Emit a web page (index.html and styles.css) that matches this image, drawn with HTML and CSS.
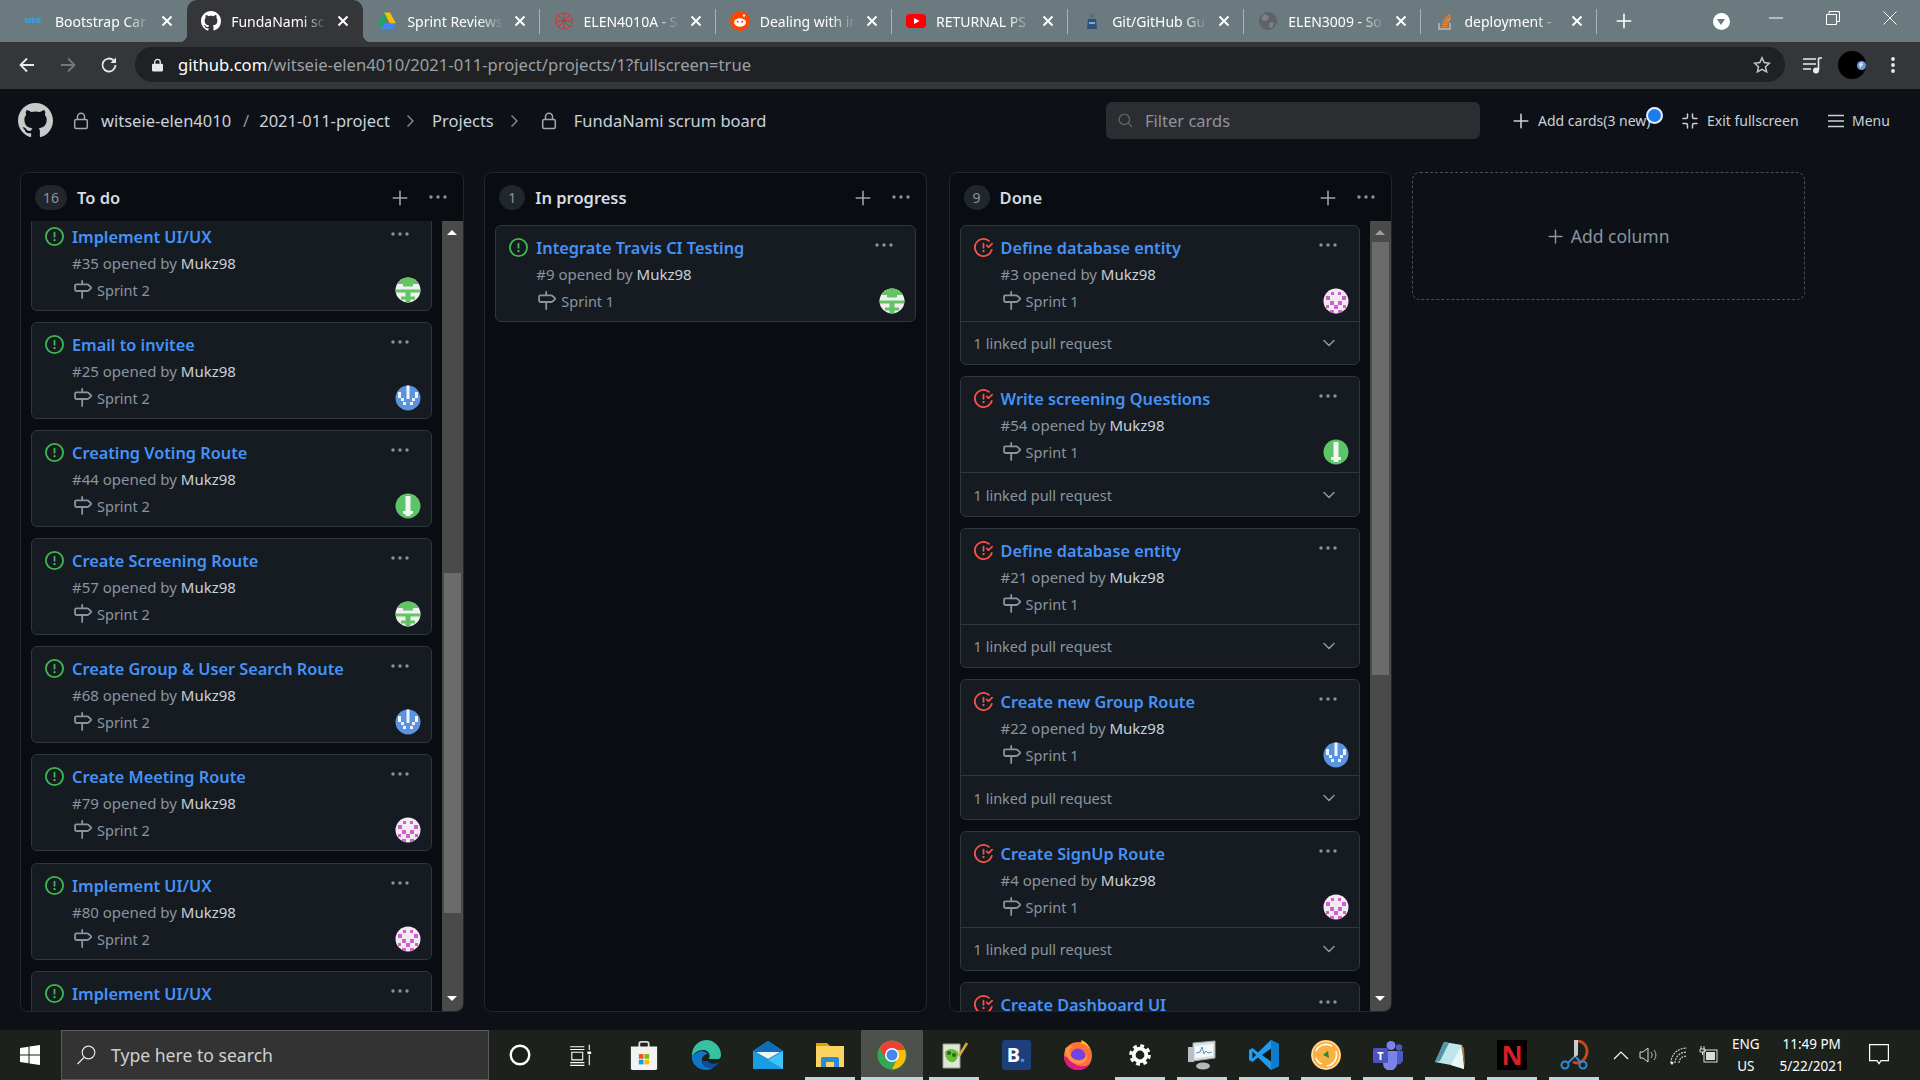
FILE: index.html
```html
<!DOCTYPE html>
<html lang="en">
<head>
    <meta charset="UTF-8">
    <title>FundaNami scrum board</title>
    <link rel="stylesheet" href="styles.css">
</head>
<body>

<!-- shared icons -->
<svg class="sprite" aria-hidden="true">
    <clipPath id="av-clip"><circle cx="13" cy="13" r="12.500"/></clipPath>
    <symbol id="i-github" viewBox="0 0 16 16"><path fill-rule="evenodd" d="M8 0C3.58 0 0 3.58 0 8c0 3.54 2.29 6.53 5.47 7.59.4.07.55-.17.55-.38 0-.19-.01-.82-.01-1.49-2.01.37-2.53-.49-2.69-.94-.09-.23-.48-.94-.82-1.13-.28-.15-.68-.52-.01-.53.63-.01 1.08.58 1.23.82.72 1.21 1.87.87 2.33.66.07-.52.28-.87.51-1.07-1.78-.2-3.64-.89-3.64-3.95 0-.87.31-1.59.82-2.15-.08-.2-.36-1.02.08-2.12 0 0 .67-.21 2.2.82.64-.18 1.32-.27 2-.27.68 0 1.36.09 2 .27 1.53-1.04 2.2-.82 2.2-.82.44 1.1.16 1.92.08 2.12.51.56.82 1.27.82 2.15 0 3.07-1.87 3.75-3.65 3.95.29.25.54.73.54 1.48 0 1.07-.01 1.93-.01 2.2 0 .21.15.46.55.38A8.013 8.013 0 0016 8c0-4.42-3.58-8-8-8z"/></symbol>
    <symbol id="i-open" viewBox="0 0 16 16"><path fill-rule="evenodd" d="M8 1.5a6.5 6.5 0 100 13 6.5 6.5 0 000-13zM0 8a8 8 0 1116 0A8 8 0 010 8zm9 3a1 1 0 11-2 0 1 1 0 012 0zm-.25-6.25a.75.75 0 00-1.5 0v3.5a.75.75 0 001.5 0v-3.5z"/></symbol>
    <symbol id="i-closed" viewBox="0 0 16 16"><path d="M1.5 8a6.5 6.5 0 0110.65-5.003.75.75 0 00.959-1.153 8 8 0 102.592 8.33.75.75 0 10-1.444-.407A6.5 6.5 0 011.5 8zM8 12a1 1 0 100-2 1 1 0 000 2zm0-8a.75.75 0 01.75.75v3.5a.75.75 0 11-1.5 0v-3.5A.75.75 0 018 4zm4.78 4.28l3-3a.75.75 0 00-1.06-1.06l-2.47 2.47-.97-.97a.749.749 0 10-1.06 1.06l1.5 1.5a.75.75 0 001.06 0z"/></symbol>
    <symbol id="i-milestone" viewBox="0 0 16 16"><path fill-rule="evenodd" d="M7.75 0a.75.75 0 01.75.75V3h3.634c.414 0 .814.147 1.13.414l2.07 1.75a1.75 1.75 0 010 2.672l-2.07 1.75a1.75 1.75 0 01-1.13.414H8.5v5.25a.75.75 0 11-1.5 0V10H2.75A1.75 1.75 0 011 8.25v-3.5C1 3.784 1.784 3 2.75 3H7V.75A.75.75 0 017.75 0zm0 8.5h4.384a.25.25 0 00.161-.06l2.07-1.75a.25.25 0 000-.38l-2.07-1.75a.25.25 0 00-.161-.06H2.75a.25.25 0 00-.25.25v3.5c0 .138.112.25.25.25h5z"/></symbol>
    <symbol id="i-dots" viewBox="0 0 20 4"><circle cx="3" cy="2" r="1.7"/><circle cx="10" cy="2" r="1.7"/><circle cx="17" cy="2" r="1.7"/></symbol>
    <symbol id="i-plus" viewBox="0 0 16 16"><path d="M8 1.2v13.6M1.2 8h13.6" fill="none" stroke="currentColor" stroke-width="1.6" stroke-linecap="round"/></symbol>
    <symbol id="i-close" viewBox="0 0 12 12"><path d="M1.5 1.5l9 9M10.5 1.5l-9 9" fill="none" stroke="currentColor" stroke-width="2"/></symbol>
    <symbol id="i-chevron" viewBox="0 0 14 14"><path d="M2 4.5l5 5 5-5" fill="none" stroke="currentColor" stroke-width="1.6" stroke-linecap="round" stroke-linejoin="round"/></symbol>
    <symbol id="i-crumb" viewBox="0 0 10 16"><path d="M2.5 2.5L8 8l-5.500 5.500" fill="none" stroke="currentColor" stroke-width="1.3"/></symbol>
    <symbol id="i-lock" viewBox="0 0 16 18"><rect x="1.700" y="7.500" width="12.600" height="9" rx="1.500" fill="none" stroke="currentColor" stroke-width="1.500"/><path d="M4.500 7.500V4.800a3.500 3.500 0 017 0v2.700" fill="none" stroke="currentColor" stroke-width="1.500"/></symbol>

    <symbol id="av-green" viewBox="0 0 26 26"><g clip-path="url(#av-clip)"><rect width="26" height="26" fill="#f0f0f0"/><path d="M0 0h26v7H0zM8 7h10v2.500H8zM0 12.500h26v3H0zM10.500 15h5v11h-5zM6 19.500h14v3H6z" fill="#62c462"/></g></symbol>
    <symbol id="av-blue" viewBox="0 0 26 26"><g clip-path="url(#av-clip)"><rect width="26" height="26" fill="#5a94e0"/><path d="M11.500 0h3v14h-3zM3 7h3v6H3zM20 7h3v6h-3zM6 13h3v3H6zM17 13h3v3h-3zM8 17h3v3H8zM15 17h3v3h-3z" fill="#f0f4fa"/></g></symbol>
    <symbol id="av-pink" viewBox="0 0 26 26"><g clip-path="url(#av-clip)"><rect width="26" height="26" fill="#f2e9f2"/><path d="M3 8h4v4H3zM19 8h4v4h-4zM8 4h3v3H8zM15 4h3v3h-3zM7 13h4v4H7zM15 13h4v4h-4zM11 17h4v4h-4zM3 17h3v3H3zM20 17h3v3h-3zM7 22h4v4H7zM15 22h4v4h-4z" fill="#c866c8"/></g></symbol>
    <symbol id="av-mint" viewBox="0 0 26 26"><g clip-path="url(#av-clip)"><rect width="26" height="26" fill="#5ec46a"/><path d="M10.500 3h5v20h-5zM8 18h10v3H8z" fill="#f2f6f2"/></g></symbol>
</svg>

<div class="tabstrip">
    <div class="tab">
        <span class="tab-icon mdb">MDB</span>
        <span class="tab-title">Bootstrap Car</span>
        <svg class="tab-close"><use href="#i-close"/></svg>
    </div>
    <div class="tab active">
        <svg class="tab-icon" viewBox="0 0 20 20"><use href="#i-github" width="20" height="20" fill="#fff"/></svg>
        <span class="tab-title">FundaNami sc</span>
        <svg class="tab-close"><use href="#i-close"/></svg>
    </div>
    <div class="tab sep">
        <svg class="tab-icon" viewBox="0 0 20 20"><path d="M7 1.500h6l6 11h-6z" fill="#fbbc04"/><path d="M7 1.500l-6 11 3 5.500 6-11z" fill="#1fa463"/><path d="M4 18h12l3-5.500H7z" fill="#4285f4"/></svg>
        <span class="tab-title">Sprint Reviews</span>
        <svg class="tab-close"><use href="#i-close"/></svg>
    </div>
    <div class="tab sep">
        <svg class="tab-icon" viewBox="0 0 20 20"><circle cx="10" cy="10" r="8" fill="none" stroke="#d83a3a" stroke-width="1.600" stroke-dasharray="3 1.200"/><path d="M10 2v16M2 10h16M4.500 4.500l11 11M15.500 4.500l-11 11" stroke="#c92f2f" stroke-width=".9"/></svg>
        <span class="tab-title">ELEN4010A - S</span>
        <svg class="tab-close"><use href="#i-close"/></svg>
    </div>
    <div class="tab sep">
        <svg class="tab-icon" viewBox="0 0 20 20"><circle cx="10" cy="10" r="10" fill="#ff4500"/><ellipse cx="10" cy="11.500" rx="6" ry="4.200" fill="#fff"/><circle cx="7.800" cy="10.800" r="1" fill="#ff4500"/><circle cx="12.200" cy="10.800" r="1" fill="#ff4500"/><circle cx="14" cy="4.500" r="1.200" fill="#fff"/></svg>
        <span class="tab-title">Dealing with in</span>
        <svg class="tab-close"><use href="#i-close"/></svg>
    </div>
    <div class="tab sep">
        <svg class="tab-icon" viewBox="0 0 20 20"><rect y="3" width="20" height="14" rx="4" fill="#f00"/><path d="M8 7l5.500 3L8 13z" fill="#fff"/></svg>
        <span class="tab-title">RETURNAL PS</span>
        <svg class="tab-close"><use href="#i-close"/></svg>
    </div>
    <div class="tab sep">
        <svg class="tab-icon" viewBox="0 0 20 20"><path d="M7 1l3 4 3-4-2 6h-2z" fill="#4a6a8a"/><path d="M6 8h8l1 10H5z" fill="#2f4f7f"/><path d="M7 11h6v2H7z" fill="#8aa4c4"/></svg>
        <span class="tab-title">Git/GitHub Gu</span>
        <svg class="tab-close"><use href="#i-close"/></svg>
    </div>
    <div class="tab sep">
        <svg class="tab-icon" viewBox="0 0 20 20"><circle cx="10" cy="10" r="9" fill="#5f6368"/><path d="M6 3l5 2-1 4-4 1-3-2zM12 11l4 1-2 5-3-1z" fill="#7d8286"/></svg>
        <span class="tab-title">ELEN3009 - So</span>
        <svg class="tab-close"><use href="#i-close"/></svg>
    </div>
    <div class="tab sep">
        <svg class="tab-icon" viewBox="0 0 20 20"><path d="M4 12v6h11v-6" fill="none" stroke="#bcbbbb" stroke-width="1.500"/><path d="M6.500 15.500h6M6.700 13l6 .6M7.500 10.300l5.800 1.600M9 7.700l5 3M11 5.300l3.800 4.500M13.700 3.300l1.700 5.500" stroke="#f48024" stroke-width="1.500"/></svg>
        <span class="tab-title">deployment -</span>
        <svg class="tab-close"><use href="#i-close"/></svg>
    </div>
    <svg class="new-tab"><use href="#i-plus"/></svg>
    <span class="tab-search"></span>
    <div class="window-controls">
        <svg viewBox="0 0 14 14"><path d="M0 7h14" stroke="#fff"/></svg>
        <svg viewBox="0 0 14 14"><path d="M.5 3.500h10v10H.500zM3 3.500V.5h10.500v10h-3" fill="none" stroke="#fff"/></svg>
        <svg viewBox="0 0 14 14"><path d="M.5.5l13 13M13.500.5l-13 13" stroke="#fff"/></svg>
    </div>
</div>

<div class="toolbar">
    <svg class="nav-icon" viewBox="0 0 18 18"><path d="M16 9H2.500M9 2.500L2.500 9 9 15.500" fill="none" stroke="#e8eaed" stroke-width="1.800"/></svg>
    <svg class="nav-icon" viewBox="0 0 18 18"><path d="M2 9h13.500M9 2.500L15.500 9 9 15.500" fill="none" stroke="#74777b" stroke-width="1.800"/></svg>
    <svg class="nav-icon" viewBox="0 0 18 18"><path d="M15.500 9A6.500 6.500 0 1113.600 4.400" fill="none" stroke="#e8eaed" stroke-width="1.800"/><path d="M16 1.500v5.500h-5.500z" fill="#e8eaed"/></svg>
    <div class="omnibox">
        <svg class="omni-lock" viewBox="0 0 12 14"><rect y="5.500" width="12" height="8.500" rx="1.200" fill="#e8eaed"/><path d="M3 6V3.800a3 3 0 016 0V6" fill="none" stroke="#e8eaed" stroke-width="1.400"/></svg>
        <span class="url"><b>github.com</b>/witseie-elen4010/2021-011-project/projects/1?fullscreen=true</span>
        <svg class="omni-star" viewBox="0 0 18 18"><path d="M9 1.800l2.200 4.800 5.200.6-3.900 3.500 1.100 5.200L9 13.300l-4.600 2.600 1.100-5.200L1.600 7.200l5.200-.6z" fill="none" stroke="#c4c7ca" stroke-width="1.500"/></svg>
    </div>
    <svg class="tool-icon" viewBox="0 0 20 18"><path d="M1 3h13M1 8h13M1 13h8" stroke="#e8eaed" stroke-width="1.500"/><path d="M16.500 2v12" stroke="#e8eaed" stroke-width="1.600"/><path d="M16.500 2H20" stroke="#e8eaed" stroke-width="1.600"/><circle cx="14" cy="14.500" r="3" fill="#e8eaed"/></svg>
    <svg class="profile" viewBox="0 0 28 28"><circle cx="14" cy="14" r="14" fill="#000"/><circle cx="23.500" cy="14.500" r="4.500" fill="#6d9bd8"/><path d="M21 13l3-2 1 3-3 3z" fill="#cfe0f4"/></svg>
    <svg class="tool-icon kebab" viewBox="0 0 4 18"><circle cx="2" cy="3" r="1.900" fill="#e8eaed"/><circle cx="2" cy="9" r="1.900" fill="#e8eaed"/><circle cx="2" cy="15" r="1.900" fill="#e8eaed"/></svg>
</div>

<header class="gh-header">
    <svg class="gh-logo"><use href="#i-github"/></svg>
    <svg class="crumb-lock"><use href="#i-lock"/></svg>
    <span class="crumb-text">witseie-elen4010</span>
    <span class="crumb-slash">/</span>
    <span class="crumb-text">2021-011-project</span>
    <svg class="crumb-chevron"><use href="#i-crumb"/></svg>
    <span class="crumb-text">Projects</span>
    <svg class="crumb-chevron"><use href="#i-crumb"/></svg>
    <svg class="crumb-lock second"><use href="#i-lock"/></svg>
    <span class="crumb-text">FundaNami scrum board</span>

    <div class="filter">
        <svg viewBox="0 0 16 16"><circle cx="6.800" cy="6.800" r="5.600" fill="none" stroke="currentColor" stroke-width="1.400"/><path d="M11 11l4 4" stroke="currentColor" stroke-width="1.400"/></svg>
        <span>Filter cards</span>
    </div>

    <div class="head-action add-cards">
        <svg><use href="#i-plus"/></svg>
        <span>Add cards(3 new)</span>
        <i class="new-dot"></i>
    </div>
    <div class="head-action exit">
        <svg viewBox="0 0 16 16"><path d="M5.500 1v3A1.500 1.500 0 014 5.500H1M10.500 1v3A1.500 1.500 0 0012 5.500h3M5.500 15v-3A1.500 1.500 0 004 10.500H1M10.500 15v-3a1.500 1.500 0 011.500-1.500h3" fill="none" stroke="currentColor" stroke-width="1.500" stroke-linecap="round"/></svg>
        <span>Exit fullscreen</span>
    </div>
    <div class="head-action menu">
        <svg viewBox="0 0 16 16"><path d="M0 2.500h16M0 8h16M0 13.500h16" stroke="currentColor" stroke-width="1.500"/></svg>
        <span>Menu</span>
    </div>
</header>

<main class="board">
    <section class="column">
        <div class="column-head">
            <span class="count">16</span>
            <h2>To do</h2>
            <svg class="col-plus"><use href="#i-plus"/></svg>
            <svg class="dots"><use href="#i-dots"/></svg>
        </div>
        <div class="column-body">
            <div class="cards scrolled">
                <article class="card"><div class="card-main">
                    <svg class="state open"><use href="#i-open"/></svg>
                    <div class="card-text">
                        <div class="title-row"><a>Implement UI/UX</a><svg class="dots"><use href="#i-dots"/></svg></div>
                        <div class="meta">#35 opened by <b>Mukz98</b></div>
                        <div class="sprint-row"><svg class="ms"><use href="#i-milestone"/></svg><span>Sprint 2</span><svg class="avatar"><use href="#av-green"/></svg></div>
                    </div>
                </div></article>
                <article class="card"><div class="card-main">
                    <svg class="state open"><use href="#i-open"/></svg>
                    <div class="card-text">
                        <div class="title-row"><a>Email to invitee</a><svg class="dots"><use href="#i-dots"/></svg></div>
                        <div class="meta">#25 opened by <b>Mukz98</b></div>
                        <div class="sprint-row"><svg class="ms"><use href="#i-milestone"/></svg><span>Sprint 2</span><svg class="avatar"><use href="#av-blue"/></svg></div>
                    </div>
                </div></article>
                <article class="card"><div class="card-main">
                    <svg class="state open"><use href="#i-open"/></svg>
                    <div class="card-text">
                        <div class="title-row"><a>Creating Voting Route</a><svg class="dots"><use href="#i-dots"/></svg></div>
                        <div class="meta">#44 opened by <b>Mukz98</b></div>
                        <div class="sprint-row"><svg class="ms"><use href="#i-milestone"/></svg><span>Sprint 2</span><svg class="avatar"><use href="#av-mint"/></svg></div>
                    </div>
                </div></article>
                <article class="card"><div class="card-main">
                    <svg class="state open"><use href="#i-open"/></svg>
                    <div class="card-text">
                        <div class="title-row"><a>Create Screening Route</a><svg class="dots"><use href="#i-dots"/></svg></div>
                        <div class="meta">#57 opened by <b>Mukz98</b></div>
                        <div class="sprint-row"><svg class="ms"><use href="#i-milestone"/></svg><span>Sprint 2</span><svg class="avatar"><use href="#av-green"/></svg></div>
                    </div>
                </div></article>
                <article class="card"><div class="card-main">
                    <svg class="state open"><use href="#i-open"/></svg>
                    <div class="card-text">
                        <div class="title-row"><a>Create Group &amp; User Search Route</a><svg class="dots"><use href="#i-dots"/></svg></div>
                        <div class="meta">#68 opened by <b>Mukz98</b></div>
                        <div class="sprint-row"><svg class="ms"><use href="#i-milestone"/></svg><span>Sprint 2</span><svg class="avatar"><use href="#av-blue"/></svg></div>
                    </div>
                </div></article>
                <article class="card"><div class="card-main">
                    <svg class="state open"><use href="#i-open"/></svg>
                    <div class="card-text">
                        <div class="title-row"><a>Create Meeting Route</a><svg class="dots"><use href="#i-dots"/></svg></div>
                        <div class="meta">#79 opened by <b>Mukz98</b></div>
                        <div class="sprint-row"><svg class="ms"><use href="#i-milestone"/></svg><span>Sprint 2</span><svg class="avatar"><use href="#av-pink"/></svg></div>
                    </div>
                </div></article>
                <article class="card"><div class="card-main">
                    <svg class="state open"><use href="#i-open"/></svg>
                    <div class="card-text">
                        <div class="title-row"><a>Implement UI/UX</a><svg class="dots"><use href="#i-dots"/></svg></div>
                        <div class="meta">#80 opened by <b>Mukz98</b></div>
                        <div class="sprint-row"><svg class="ms"><use href="#i-milestone"/></svg><span>Sprint 2</span><svg class="avatar"><use href="#av-pink"/></svg></div>
                    </div>
                </div></article>
                <article class="card"><div class="card-main">
                    <svg class="state open"><use href="#i-open"/></svg>
                    <div class="card-text">
                        <div class="title-row"><a>Implement UI/UX</a><svg class="dots"><use href="#i-dots"/></svg></div>
                    </div>
                </div></article>
            </div>
            <div class="scrollbar">
                <div class="scroll-btn up"></div>
                <div class="scroll-track"><div class="thumb todo-thumb"></div></div>
                <div class="scroll-btn down"></div>
            </div>
        </div>
    </section>

    <section class="column">
        <div class="column-head">
            <span class="count">1</span>
            <h2>In progress</h2>
            <svg class="col-plus"><use href="#i-plus"/></svg>
            <svg class="dots"><use href="#i-dots"/></svg>
        </div>
        <div class="column-body">
            <div class="cards">
                <article class="card"><div class="card-main">
                    <svg class="state open"><use href="#i-open"/></svg>
                    <div class="card-text">
                        <div class="title-row"><a>Integrate Travis CI Testing</a><svg class="dots"><use href="#i-dots"/></svg></div>
                        <div class="meta">#9 opened by <b>Mukz98</b></div>
                        <div class="sprint-row"><svg class="ms"><use href="#i-milestone"/></svg><span>Sprint 1</span><svg class="avatar"><use href="#av-green"/></svg></div>
                    </div>
                </div></article>
            </div>
        </div>
    </section>

    <section class="column">
        <div class="column-head">
            <span class="count">9</span>
            <h2>Done</h2>
            <svg class="col-plus"><use href="#i-plus"/></svg>
            <svg class="dots"><use href="#i-dots"/></svg>
        </div>
        <div class="column-body">
            <div class="cards">
                <article class="card"><div class="card-main">
                    <svg class="state closed"><use href="#i-closed"/></svg>
                    <div class="card-text">
                        <div class="title-row"><a>Define database entity</a><svg class="dots"><use href="#i-dots"/></svg></div>
                        <div class="meta">#3 opened by <b>Mukz98</b></div>
                        <div class="sprint-row"><svg class="ms"><use href="#i-milestone"/></svg><span>Sprint 1</span><svg class="avatar"><use href="#av-pink"/></svg></div>
                    </div>
                </div>
                <div class="linked">1 linked pull request<svg><use href="#i-chevron"/></svg></div></article>
                <article class="card"><div class="card-main">
                    <svg class="state closed"><use href="#i-closed"/></svg>
                    <div class="card-text">
                        <div class="title-row"><a>Write screening Questions</a><svg class="dots"><use href="#i-dots"/></svg></div>
                        <div class="meta">#54 opened by <b>Mukz98</b></div>
                        <div class="sprint-row"><svg class="ms"><use href="#i-milestone"/></svg><span>Sprint 1</span><svg class="avatar"><use href="#av-mint"/></svg></div>
                    </div>
                </div>
                <div class="linked">1 linked pull request<svg><use href="#i-chevron"/></svg></div></article>
                <article class="card"><div class="card-main">
                    <svg class="state closed"><use href="#i-closed"/></svg>
                    <div class="card-text">
                        <div class="title-row"><a>Define database entity</a><svg class="dots"><use href="#i-dots"/></svg></div>
                        <div class="meta">#21 opened by <b>Mukz98</b></div>
                        <div class="sprint-row"><svg class="ms"><use href="#i-milestone"/></svg><span>Sprint 1</span></div>
                    </div>
                </div>
                <div class="linked">1 linked pull request<svg><use href="#i-chevron"/></svg></div></article>
                <article class="card"><div class="card-main">
                    <svg class="state closed"><use href="#i-closed"/></svg>
                    <div class="card-text">
                        <div class="title-row"><a>Create new Group Route</a><svg class="dots"><use href="#i-dots"/></svg></div>
                        <div class="meta">#22 opened by <b>Mukz98</b></div>
                        <div class="sprint-row"><svg class="ms"><use href="#i-milestone"/></svg><span>Sprint 1</span><svg class="avatar"><use href="#av-blue"/></svg></div>
                    </div>
                </div>
                <div class="linked">1 linked pull request<svg><use href="#i-chevron"/></svg></div></article>
                <article class="card"><div class="card-main">
                    <svg class="state closed"><use href="#i-closed"/></svg>
                    <div class="card-text">
                        <div class="title-row"><a>Create SignUp Route</a><svg class="dots"><use href="#i-dots"/></svg></div>
                        <div class="meta">#4 opened by <b>Mukz98</b></div>
                        <div class="sprint-row"><svg class="ms"><use href="#i-milestone"/></svg><span>Sprint 1</span><svg class="avatar"><use href="#av-pink"/></svg></div>
                    </div>
                </div>
                <div class="linked">1 linked pull request<svg><use href="#i-chevron"/></svg></div></article>
                <article class="card"><div class="card-main">
                    <svg class="state closed"><use href="#i-closed"/></svg>
                    <div class="card-text">
                        <div class="title-row"><a>Create Dashboard UI</a><svg class="dots"><use href="#i-dots"/></svg></div>
                    </div>
                </div></article>
            </div>
            <div class="scrollbar">
                <div class="scroll-btn up muted"></div>
                <div class="scroll-track"><div class="thumb done-thumb"></div></div>
                <div class="scroll-btn down"></div>
            </div>
        </div>
    </section>

    <div class="add-column">
        <svg><use href="#i-plus"/></svg>
        <span>Add column</span>
    </div>
</main>

<footer class="taskbar">
    <svg class="start" viewBox="0 0 20 20"><path d="M0 3l8.500-1.200v7.700H0zM9.500 1.600L20 0v9.500H9.500zM0 10.500h8.500v7.700L0 17zM9.500 10.500H20V20L9.500 18.400z" fill="#fff"/></svg>
    <div class="search">
        <svg viewBox="0 0 20 20"><circle cx="12.500" cy="7.500" r="6.300" fill="none" stroke="#e6e6e6" stroke-width="1.200"/><path d="M8 12.500l-6.500 6.500" stroke="#e6e6e6" stroke-width="1.200"/></svg>
        <span>Type here to search</span>
    </div>
    <div class="task-icons">
        <div class="task"><svg viewBox="0 0 22 22"><circle cx="11" cy="11" r="8.500" fill="none" stroke="#fff" stroke-width="2.200"/></svg></div>
        <div class="task"><svg class="taskview" viewBox="0 0 22 22"><path d="M2 3.500h13M2 6h13M3.500 8.500h10v7h-10zM2 18h13M2 20.500h13M19.500 1.500v5M19.500 11v9.500" fill="none" stroke="#fff" stroke-width="1"/><rect x="17.800" y="7.800" width="3.400" height="2.400" fill="#fff"/></svg></div>
        <div class="task"><svg viewBox="0 0 30 32"><path d="M10 8V4a2 2 0 012-2h6a2 2 0 012 2v4" fill="none" stroke="#d9d9d9" stroke-width="2"/><path d="M1 7h28v23a2 2 0 01-2 2H3a2 2 0 01-2-2z" fill="#f2f2f2"/><path d="M9.500 15h5v5h-5z" fill="#f25022"/><path d="M15.500 15h5v5h-5z" fill="#7fba00"/><path d="M9.500 21h5v5h-5z" fill="#00a4ef"/><path d="M15.500 21h5v5h-5z" fill="#ffb900"/></svg></div>
        <div class="task"><svg viewBox="0 0 30 30"><path d="M15 0a15 15 0 0115 15c0 2-1 4-3 4h-9c2-5-1-9-6-9-6 0-10 4-11 7A15 15 0 0115 0z" fill="#35c1a2"/><path d="M.8 17C1 25 8 30 15 30c3 0 6-1 8-3-7 2-11-1-12-5s2-8 6-8c-3-3-7-4-10-2S1 14 .8 17z" fill="#0f75c8"/><path d="M11 21c1 5 6 9 12 6 2-1 4-3 5-5-4 3-10 2-11-1z" fill="#0c4f9e"/></svg></div>
        <div class="task"><svg viewBox="0 0 30 30"><path d="M0 11L15 1l15 10v18H0z" fill="#29b6f6"/><path d="M15 1L0 11l15 9 15-9z" fill="#0d6ebd"/><path d="M3 12h24l-12 7z" fill="#eef4f8"/><path d="M0 11l15 9 15-9v18z" fill="#3dc3f5"/><path d="M0 11v18h30z" fill="#1a9ce0"/></svg></div>
        <div class="task"><svg viewBox="0 0 30 30"><path d="M1 3h11l3 3h-14z" fill="#e2a100"/><rect x="1" y="6" width="28" height="21" fill="#fcd462"/><path d="M6 27v-8a2 2 0 012-2h14a2 2 0 012 2v8h-5v-5h-8v5z" fill="#2d8ad8"/></svg></div>
        <div class="task active"><svg viewBox="0 0 30 30"><circle cx="15" cy="15" r="14.500" fill="#34a853"/><path d="M15 .5A14.500 14.500 0 002.500 8L8 17l7-7h13A14.500 14.500 0 0015 .5z" fill="#ea4335"/><path d="M28 10H15l6 7-6 12.500A14.500 14.500 0 0028 10z" fill="#fbbc04"/><circle cx="15" cy="15" r="7" fill="#fff"/><circle cx="15" cy="15" r="5.500" fill="#4285f4"/></svg></div>
        <div class="task"><svg viewBox="0 0 30 30"><path d="M4 4h17v24H4z" fill="#dfe6d6" stroke="#9aa48c"/><path d="M6 12c3-4 9-4 13 0 1 3-1 8-4 10-5 1-9-3-9-10z" fill="#6abf2e"/><circle cx="10" cy="13" r="2" fill="#263"/><circle cx="15" cy="15" r="2" fill="#263"/><path d="M20 16L28 3" stroke="#d9a83c" stroke-width="2.500"/></svg></div>
        <div class="task"><span class="booking">B<i>.</i></span></div>
        <div class="task"><svg viewBox="0 0 30 30"><circle cx="15" cy="16" r="14" fill="#ff7139"/><path d="M15 3c8 0 14 6 14 13 0-6-4-14-11-16 1 2 1 3-3 3z" fill="#ffbd2e"/><path d="M1 16C1 24 7 30 15 30c5 0 9-2 12-6-6 4-16 3-19-5z" fill="#e31587"/><circle cx="15" cy="16" r="7.500" fill="#7542e5"/><path d="M2 9c2-3 6-4 9-2-4 0-5 3-4 6 1 5 5 8 11 7 4-1 5-4 5-6 2 4 0 9-6 10C9 25 3 19 2 9z" fill="#ff9640"/></svg></div>
        <div class="task"><svg viewBox="0 0 24 24"><circle cx="12" cy="12" r="6.300" fill="none" stroke="#fff" stroke-width="3.800"/><circle cx="12" cy="12" r="9.300" fill="none" stroke="#fff" stroke-width="3" stroke-dasharray="3.800 3.500"/></svg></div>
        <div class="task"><svg viewBox="0 0 30 30"><path d="M6 3l22-2v17L6 21z" fill="#dbe0e3" stroke="#9aa"/><path d="M8 6l18-2v12L8 18z" fill="#f6f8fa"/><path d="M9 13l4-1 2-5 2 7 2-3 2 2 4-1" fill="none" stroke="#4a90c2"/><rect x="1" y="7" width="6" height="15" fill="#b9bfc2"/><ellipse cx="16" cy="26" rx="7" ry="3.500" fill="#b5b8ba"/></svg></div>
        <div class="task"><svg viewBox="0 0 30 30"><path d="M22 0l8 4v22l-8 4L9 17.500 3.500 22 0 20V10l3.500-2L9 12.500z" fill="#1f9cf0"/><path d="M22 0v30l8-4V4z" fill="#0e7ccb"/><path d="M22 8.500L13 15l9 6.500z" fill="#111a14"/><path d="M3.500 11.500v7L7 15z" fill="#111a14"/></svg></div>
        <div class="task"><svg viewBox="0 0 30 30"><circle cx="15" cy="15" r="15" fill="#fbb040"/><circle cx="15" cy="15" r="14" fill="none" stroke="#fff" stroke-width=".8"/><path d="M5 11C8 4 16 3 21 6M25 11c2 7-2 14-9 15M5 18c1 3 3 5 6 6" fill="none" stroke="#fff" stroke-width="1.600"/><path d="M12 15l5-4 1 7z" fill="#1f8a3b"/></svg></div>
        <div class="task"><span class="teams"><svg viewBox="0 0 30 30"><circle cx="18" cy="5.500" r="4.500" fill="#7b83eb"/><circle cx="26" cy="7.500" r="3.200" fill="#5059c9"/><path d="M20 11h10v9a5 5 0 01-7 4z" fill="#5059c9"/><path d="M9 11h15v12a7 7 0 01-14 1z" fill="#7b83eb"/><rect y="8" width="15" height="15" rx="1.500" fill="#4b53bc"/></svg><b>T</b></span></div>
        <div class="task"><svg viewBox="0 0 30 30"><path d="M9 2l18 3 2 24-13-4L0 22z" fill="#bfe6ec"/><path d="M9 2l5 1-9 18-5 1z" fill="#4f97a8"/><path d="M27 5l2 24-13-4z" fill="#eaf7f9"/><path d="M26 5l3 3 1 20z" fill="#a07c40"/></svg></div>
        <div class="task"><span class="netflix">N</span></div>
        <div class="task"><svg viewBox="0 0 30 30"><path d="M18 1c8 0 12 8 9 15s-9 8-13 6" fill="none" stroke="#c9461f" stroke-width="3"/><path d="M15 0h4v15l-4 3z" fill="#c8ccce"/><path d="M15 17l-6 6M17 17l5 6" stroke="#2d8ad8" stroke-width="2"/><circle cx="6" cy="25" r="3.500" fill="none" stroke="#2d8ad8" stroke-width="2"/><circle cx="24" cy="25" r="3.500" fill="none" stroke="#2d8ad8" stroke-width="2"/></svg></div>
    </div>
    <div class="tray">
        <svg class="tray-chevron" viewBox="0 0 16 10"><path d="M1 9l7-7 7 7" fill="none" stroke="#fff" stroke-width="1.200"/></svg>
        <svg class="tray-icon" viewBox="0 0 20 20"><path d="M1 7h3l5-4v14l-5-4H1z" fill="none" stroke="#ddd"/><path d="M12 7c1.500 2 1.500 4 0 6M15 5c2.500 3 2.500 7 0 10" fill="none" stroke="#bbb"/></svg>
        <svg class="tray-icon" viewBox="0 0 20 20"><path d="M2 18C2 9 9 3 18 3M6 18c0-6 5-11 12-11M10 18c0-4 3-7 8-7" fill="none" stroke="#ccc" stroke-width="1.200" stroke-dasharray="2 1"/><circle cx="3" cy="18" r="1.500" fill="#ddd"/></svg>
        <svg class="tray-icon" viewBox="0 0 20 20"><rect x="5" y="5" width="13" height="12" fill="none" stroke="#ddd"/><rect x="7" y="7" width="9" height="8" fill="#ddd"/><path d="M2 1v3M5 1v3M1 4h5v3H1zM3.500 7v3" stroke="#ddd" fill="none"/></svg>
        <div class="lang"><span>ENG</span><span>US</span></div>
        <div class="clock"><span>11:49 PM</span><span>5/22/2021</span></div>
        <svg class="notify" viewBox="0 0 20 22"><path d="M.6.6h18.800v16H12l-2 3-2-3H.600z" fill="none" stroke="#fff" stroke-width="1.200"/></svg>
    </div>
</footer>

</body>
</html>
```

FILE: styles.css
```css
* {
    box-sizing: border-box;
}

html, body {
    margin: 0;
    height: 100%;
    overflow: hidden;
}

body {
    display: flex;
    flex-direction: column;
    height: 1080px;
    background: #0d1117;
    color: #c9d1d9;
    font-family: "Noto Sans", "Open Sans", sans-serif;
    font-size: 14px;
}

.sprite {
    position: absolute;
    width: 0;
    height: 0;
}

/* browser tabs */
.tabstrip {
    display: flex;
    align-items: center;
    flex: 0 0 42px;
    padding-left: 11px;
    background: #6b7a7e;
    color: #fff;
}

.tab {
    position: relative;
    display: flex;
    align-items: center;
    flex: 0 0 176.2px;
    min-width: 0;
    height: 42px;
    padding: 0 14px;
}

.tab.sep::after {
    content: "";
    position: absolute;
    right: 0;
    top: 9px;
    height: 25px;
    border-right: 1px solid #a9b4b7;
}

.tab.active {
    background: #35363a;
    border-radius: 10px 10px 0 0;
}

.tab.active::before,
.tab.active::after {
    content: "";
    position: absolute;
    bottom: 0;
    width: 8px;
    height: 8px;
}

.tab.active::before {
    left: -8px;
    background: radial-gradient(circle at 0 0, transparent 8px, #35363a 8.5px);
}

.tab.active::after {
    right: -8px;
    background: radial-gradient(circle at 100% 0, transparent 8px, #35363a 8.5px);
}

.tab-icon {
    flex: 0 0 20px;
    width: 20px;
    height: 20px;
}

.mdb {
    font-size: 7px;
    font-weight: 700;
    line-height: 20px;
    color: #3aa0e0;
    white-space: nowrap;
}

.tab-title {
    flex: 1;
    width: 0;
    min-width: 0;
    margin: 0 8px 0 10px;
    white-space: nowrap;
    font-size: 14px;
    -webkit-mask-image: linear-gradient(90deg, #000 72%, transparent 98%);
    mask-image: linear-gradient(90deg, #000 72%, transparent 98%);
}

.tab-close {
    flex: 0 0 12px;
    width: 12px;
    height: 12px;
    color: #fff;
}

.new-tab {
    width: 16px;
    height: 16px;
    margin-left: 19px;
    color: #fff;
}

.tab-search {
    position: relative;
    width: 17px;
    height: 17px;
    margin-left: 81px;
    border-radius: 50%;
    background: #fff;
}

.tab-search::after {
    content: "";
    position: absolute;
    left: 4px;
    top: 6px;
    border: 4.5px solid transparent;
    border-top: 6px solid #6b7a7e;
    border-bottom: 0;
}

.window-controls {
    display: flex;
    align-items: center;
    gap: 43px;
    margin-left: 39px;
    margin-top: -6px;
}

.window-controls svg {
    width: 14px;
    height: 14px;
}

/* browser toolbar */
.toolbar {
    display: flex;
    align-items: center;
    flex: 0 0 47px;
    padding: 0 20px 2px 18px;
    background: #35363a;
}

.nav-icon {
    width: 18px;
    height: 18px;
    margin-right: 23px;
}

.omnibox {
    display: flex;
    align-items: center;
    width: 1650px;
    height: 35px;
    margin-left: -6px;
    padding: 0 14px 0 17px;
    border-radius: 18px;
    background: #202124;
}

.omni-lock {
    width: 11px;
    height: 14px;
}

.url {
    margin-left: 15px;
    font-size: 16.6px;
    color: #9aa0a6;
}

.url b {
    font-weight: 400;
    color: #fff;
}

.omni-star {
    width: 18px;
    height: 18px;
    margin-left: auto;
}

.tool-icon {
    width: 20px;
    height: 18px;
    margin-left: 17px;
}

.profile {
    width: 28px;
    height: 28px;
    margin-left: 16px;
}

.kebab {
    width: 4px;
    margin-left: 25px;
}

/* github header */
.gh-header {
    display: flex;
    align-items: center;
    flex: 0 0 83px;
    padding: 0 0 20px 18px;
    font-size: 16.5px;
}

.gh-logo {
    width: 35px;
    height: 35px;
    fill: #c9c9c9;
}

.crumb-lock {
    width: 16px;
    height: 18px;
    margin: 0 12px 0 20px;
    color: #a3a8ae;
}

.crumb-lock.second {
    margin: 0 17px 0 5px;
}

.crumb-text {
    white-space: nowrap;
    color: #c9d1d9;
}

.crumb-slash {
    margin: 0 10px 0 12px;
    color: #8b949e;
}

.crumb-chevron {
    width: 10px;
    height: 16px;
    margin: 0 17px 0 15px;
    color: #8b949e;
}

.filter {
    position: absolute;
    left: 1106px;
    top: 102px;
    display: flex;
    align-items: center;
    gap: 12px;
    width: 374px;
    height: 37px;
    padding-left: 12px;
    border-radius: 6px;
    background: #2b2d31;
    color: #8b949e;
    font-size: 16.5px;
}

.filter svg {
    width: 15px;
    height: 15px;
    color: #5f656c;
}

.head-action {
    position: absolute;
    top: 102px;
    display: flex;
    align-items: center;
    gap: 9px;
    height: 37px;
    font-size: 14px;
    white-space: nowrap;
    color: #c9d1d9;
}

.head-action svg {
    width: 16px;
    height: 16px;
    color: #c9d1d9;
}

.add-cards {
    left: 1513px;
}

.new-dot {
    position: absolute;
    left: 133px;
    top: 5px;
    width: 17px;
    height: 17px;
    border: 2px solid #e8f0ff;
    border-radius: 50%;
    background: #1f7cf0;
}

.exit {
    left: 1682px;
}

.menu {
    left: 1828px;
    gap: 8px;
}

/* board */
.board {
    display: flex;
    flex: 1;
    gap: 21.3px;
    min-height: 0;
    padding: 0 0 18px 20px;
}

.column {
    display: flex;
    flex-direction: column;
    flex: 0 0 443px;
    overflow: hidden;
    border: 1px solid #21262d;
    border-radius: 8px;
    background: #090c10;
}

.column:first-child {
    flex-basis: 444px;
    margin-right: -1px;
}

.column-head {
    display: flex;
    align-items: center;
    flex: 0 0 48px;
    padding: 1px 15px 0 14px;
}

.count {
    min-width: 26px;
    height: 25px;
    padding: 0 8px;
    border-radius: 13px;
    background: #21262d;
    color: #8b949e;
    font-size: 14px;
    line-height: 25px;
    text-align: center;
}

.column-head h2 {
    flex: 1;
    margin: 0 0 0 10px;
    font-size: 16.5px;
    font-weight: 600;
    color: #d5dbe1;
}

.col-plus {
    width: 16px;
    height: 16px;
    margin-right: 20px;
    color: #9aa2ab;
}

.dots {
    flex: 0 0 20px;
    width: 20px;
    height: 4px;
    fill: #8b949e;
}

.column-head .dots {
    margin-top: -1px;
}

.column-body {
    display: flex;
    flex: 1;
    min-height: 0;
}

.cards {
    display: flex;
    flex-direction: column;
    flex: 1;
    gap: 11.1px;
    min-width: 0;
    overflow: hidden;
    padding: 4px 10px 0 10px;
}

.cards.scrolled {
    padding-top: 0;
}

.cards.scrolled .card:first-child {
    margin-top: -7px;
}

/* cards */
.card {
    flex: none;
    border: 1px solid #30363d;
    border-radius: 6px;
    background: #161b22;
}

.card-main {
    display: flex;
    height: 95px;
    padding: 11px 11px 0 13px;
}

.state {
    flex: 0 0 19px;
    width: 19px;
    height: 19px;
    margin: 1px 8px 0 0;
}

.state.open {
    fill: #3fb950;
}

.state.closed {
    fill: #f85149;
}

.card-text {
    flex: 1;
    min-width: 0;
}

.title-row {
    display: flex;
    align-items: flex-start;
    justify-content: space-between;
    height: 22px;
}

.title-row a {
    font-size: 16.3px;
    font-weight: 600;
    line-height: 22px;
    color: #4493f8;
}

.title-row .dots {
    margin: 6px 10px 0 0;
}

.meta {
    margin-top: 4px;
    font-size: 15px;
    line-height: 22px;
    color: #8b949e;
}

.meta b {
    font-weight: 400;
    color: #c9d1d9;
}

.sprint-row {
    display: flex;
    align-items: flex-start;
    margin-top: 5px;
    height: 22px;
    font-size: 14.5px;
    line-height: 22px;
    color: #8b949e;
}

.ms {
    flex: 0 0 19px;
    width: 19px;
    height: 19px;
    margin: 1px 5px 0 1px;
    fill: #8b949e;
}

.avatar {
    width: 26px;
    height: 26px;
    margin: -2px -1px 0 auto;
}

.linked {
    display: flex;
    align-items: center;
    justify-content: space-between;
    height: 43.4px;
    padding: 0 23px 0 13px;
    border-top: 1px solid #30363d;
    font-size: 14.5px;
    color: #8b949e;
}

.linked svg {
    width: 14px;
    height: 14px;
}

/* fake scrollbar, the windows one */
.scrollbar {
    display: flex;
    flex-direction: column;
    flex: 0 0 21px;
    background: #4a4a4a;
}

.scroll-btn {
    position: relative;
    flex: 0 0 21px;
}

.scroll-btn::after {
    content: "";
    position: absolute;
    left: 5px;
    border: 5px solid transparent;
}

.scroll-btn.up::after {
    top: 4px;
    border-bottom: 5px solid #fff;
}

.scroll-btn.up.muted::after {
    border-bottom-color: #a0a0a0;
}

.scroll-btn.down::after {
    top: 6px;
    border-top: 5px solid #fff;
}

.scroll-track {
    flex: 1;
    padding: 0 2px;
}

.thumb {
    background: #6b6b6b;
}

.todo-thumb {
    height: 340px;
    margin-top: 331px;
}

.done-thumb {
    height: 433px;
}

.add-column {
    display: flex;
    align-items: center;
    justify-content: center;
    flex: 0 0 393.5px;
    gap: 8px;
    height: 128px;
    margin-left: -1px;
    border: 1px dashed #484f58;
    border-radius: 8px;
    font-size: 17.5px;
    color: #8b949e;
}

.add-column svg {
    width: 15px;
    height: 15px;
}

/* windows taskbar */
.taskbar {
    display: flex;
    align-items: center;
    flex: 0 0 50px;
    background: #1c211c;
}

.start {
    width: 20px;
    height: 20px;
    margin: 0 21px 0 20px;
}

.search {
    display: flex;
    align-items: center;
    gap: 15px;
    width: 428px;
    height: 50px;
    padding-left: 14px;
    background: #333;
    border: 1px solid #5a5a5a;
    color: #d0d0d0;
    font-size: 17.6px;
}

.search svg {
    width: 20px;
    height: 20px;
}

.task-icons {
    display: flex;
    height: 50px;
}

.task {
    position: relative;
    display: flex;
    align-items: center;
    justify-content: center;
    flex: 0 0 62px;
    height: 50px;
}

.task svg {
    width: 30px;
    height: 30px;
}

.task:nth-child(1) svg,
.task:nth-child(2) svg,
.task:nth-child(11) svg {
    width: 24px;
    height: 24px;
}

.task .taskview {
    margin-left: -4px;
}

.task.active {
    background: #4d514c;
}

.task:nth-child(n+6)::after {
    content: "";
    position: absolute;
    left: 6px;
    right: 6px;
    bottom: 0;
    height: 3px;
    background: #b8d8dc;
}

.task:nth-child(9)::after,
.task:nth-child(10)::after {
    display: none;
}

.task.active::after {
    left: 0;
    right: 0;
}

.booking {
    width: 29px;
    height: 30px;
    border-radius: 3px;
    background: #1d3f7c;
    color: #fff;
    font-size: 20px;
    font-weight: 700;
    line-height: 30px;
    text-align: center;
}

.booking i {
    font-style: normal;
    color: #2d9cf0;
}

.teams {
    position: relative;
    width: 30px;
    height: 30px;
}

.teams b {
    position: absolute;
    left: 0;
    top: 8px;
    width: 15px;
    color: #fff;
    font-size: 11px;
    line-height: 15px;
    text-align: center;
}

.netflix {
    width: 30px;
    height: 30px;
    background: #000;
    color: #d81f26;
    font-size: 26px;
    font-weight: 700;
    line-height: 30px;
    text-align: center;
}

.tray {
    display: flex;
    align-items: center;
    flex: 1;
    color: #fff;
    font-size: 13.5px;
}

.tray-chevron {
    width: 16px;
    height: 10px;
    margin-left: 8px;
}

.tray-icon {
    width: 20px;
    height: 20px;
    margin-left: 10px;
}

.lang, .clock {
    display: flex;
    flex-direction: column;
    align-items: center;
    gap: 3px;
    line-height: 19px;
}

.lang {
    margin-left: 13px;
}

.clock {
    margin-left: 20px;
}

.notify {
    width: 20px;
    height: 22px;
    margin-left: 25px;
}
```
